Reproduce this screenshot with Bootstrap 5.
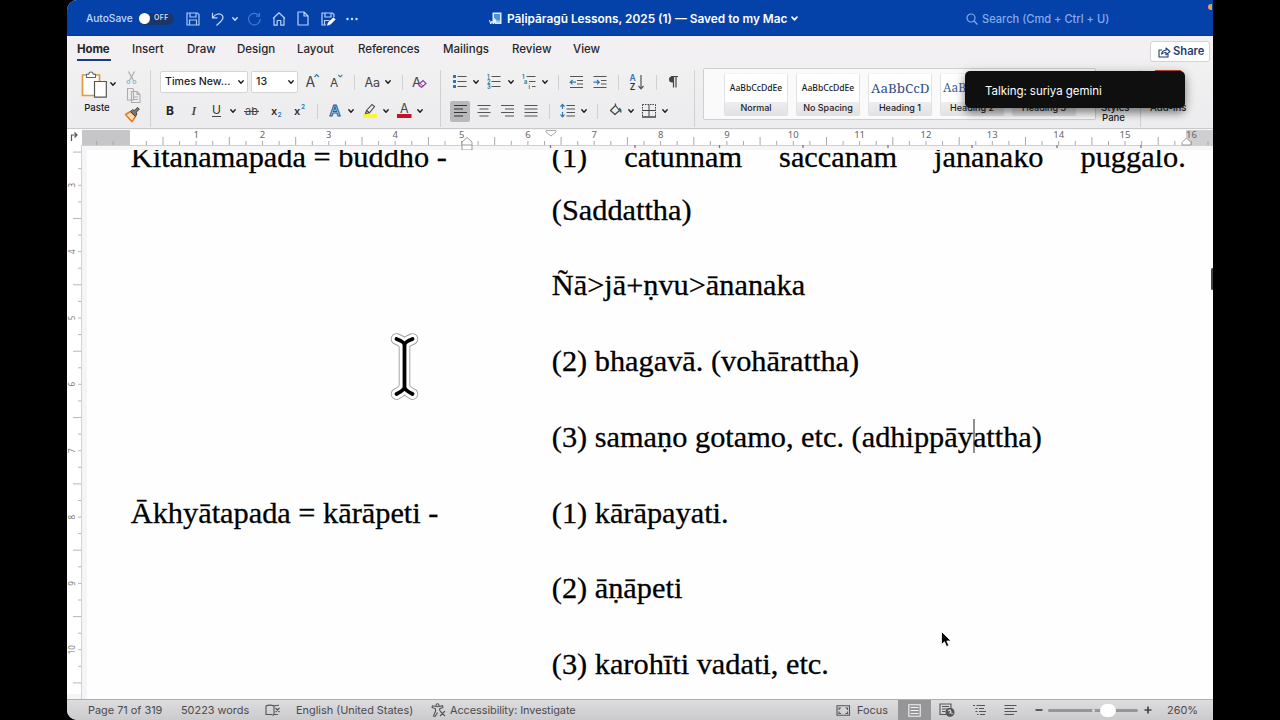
<!DOCTYPE html>
<html lang="en">
<head>
<meta charset="utf-8">
<title>Pāḷipāragū Lessons, 2025 (1)</title>
<link href="https://cdn.jsdelivr.net/npm/bootstrap@5.3.0/dist/css/bootstrap.min.css" rel="stylesheet">
<style>
body{background:#000;font-family:Inter,"Liberation Sans",sans-serif;height:720px;overflow:hidden;color:#1d1d1f}
svg{display:block;flex:none;overflow:visible}
svg text{font-family:Inter,sans-serif}
.win{width:1146px;height:720px;margin-left:67px;background:#f2f0f2;border-radius:10px 0 0 10px;overflow:hidden}
.titlebar{height:36px;padding-top:2px;background:#0442a9;color:#fff;border-bottom:1px solid #023a98}
.titlebar>*,.status>*,.tabs>*{flex:none;white-space:nowrap}
.autosave{width:45px;margin-left:19px;font-size:10.2px;font-weight:500;color:#c3d7f8}
.toggle{width:35px;height:12px;border-radius:6px;background:#1d3668;font-size:7px;font-weight:600;color:#cfdcf3;letter-spacing:.4px;margin-left:8px}
.knob{width:11px;height:11px;border-radius:50%;background:#fff}
.doctitle{width:283px;margin-left:5px;font-size:11.85px;font-weight:600;line-height:20px;padding-top:1px}
.search{width:127px;margin-left:4px;font-size:11.1px;font-weight:500;color:#86abea;line-height:20px;padding-top:1px}
.orange{width:4px;height:6px;background:#e3a04d;border-radius:3px 0 0 3px;margin-left:99px;margin-top:-24px}
.tabs{height:27px;font-size:11.5px;font-weight:500;color:#262628}
.tabs a{color:inherit;text-decoration:none;line-height:27px;height:26px}
.tabs a.active{font-weight:700;border-bottom:2px solid #1d3c78;height:25px;width:34px;letter-spacing:-.1px}
.t2{width:32px;margin-left:21px}.t3{width:28px;margin-left:23px}.t4{width:39px;margin-left:22px}.t5{width:38px;margin-left:21px}.t6{width:63px;margin-left:23px;letter-spacing:-.08px}.t7{width:47px;margin-left:22px}.t8{width:40px;margin-left:22px}.t9{width:27px;margin-left:21px}
.sharebtn{width:60px;height:21px;background:#fff;border:1px solid #d4d3d7;border-radius:3px;color:#1f3b70;font-size:11.2px;font-weight:600}
.ribbon{height:66px;background:linear-gradient(#f2f1f2,#ecebed);border-bottom:1px solid #c9c8cb}
.grp{border-right:1px solid #d0cfd2;height:57px;margin-top:7px;flex:none}
.tools{height:22px;display:flex;align-items:center;margin-top:1px}
.tools+.tools{margin-top:7px}
.tools>*{flex:none}
.vr1{width:1px;height:15px;background:#cfced2}
.sel{height:22px;background:#fff;border:1px solid #d5d4d8;border-radius:2px;font-size:10.6px;font-weight:500;padding:0 2px 0 4px;white-space:nowrap}
.pressed{background:#b9b8bb;border-radius:2px}
.g1{margin-left:1px}.g2{margin-left:2px}.g3{margin-left:3px}.g4{margin-left:4px}.g5{margin-left:5px}.g6{margin-left:6px}.g7{margin-left:7px}.g8{margin-left:8px}.g9{margin-left:9px}.g10{margin-left:10px}.g11{margin-left:11px}.g12{margin-left:12px}.g21{margin-left:21px}
.cap{font-size:9.6px;font-weight:500;line-height:10px;text-align:center;white-space:nowrap}
.gallery{width:393px;height:52px;margin:5px 0 0 8px;background:#fafafa;border:1px solid #cfced2;border-radius:2px;padding:4px 0 0 20px;flex:none}
.stylecard{width:64px;height:43px;border:1px solid #e2e1e4;border-top-color:#f2f2f2;border-radius:2px;background:linear-gradient(#fff 0 28px,#eeedef 28px,#e2e1e4);overflow:hidden;margin-right:8px;flex:none}
.sample{height:27px;font:500 8.6px/28px "Noto Sans",sans-serif;text-align:center;white-space:nowrap;overflow:hidden}
.sample.head1{font:13.4px/28px "Noto Serif","DejaVu Serif","Liberation Serif",serif;color:#2f4f80;text-align:left;padding-left:2px}
.sample.head2{font:12px/28px "Noto Serif","DejaVu Serif",serif;color:#3f5f90;text-align:left;padding-left:2px}
.stylecard .cap{font-size:9px;line-height:13px}
.toast1{left:965px;top:71px;width:220px;height:37px;background:#0f0f10;border-radius:5px;box-shadow:0 5px 9px rgba(0,0,0,.42),0 1px 14px rgba(0,0,0,.14);color:#fff;font-size:11.5px;line-height:41px;padding-left:20px;white-space:nowrap;letter-spacing:-.05px}
.docwrap{height:570px}
.hr{height:21px}
.vrl{width:20px;height:549px;flex:none}
.page{width:1126px;height:549px;background:#fefefe;overflow:hidden;font-family:"Liberation Serif","Times New Roman",serif;font-size:30.34px;line-height:52.5px;color:#000;padding-left:43.8px;-webkit-text-stroke:.3px #000}
.page .pushup{margin-top:-19px}
.lcol{width:421px;flex:none;white-space:nowrap}
.rcol{width:634px;flex:none}
.para{margin-bottom:23.3px;white-space:nowrap}
.status{height:21px;background:linear-gradient(#dddcdf,#cbcacd);border-top:1px solid #aeadaf;font-size:10.9px;color:#4b4a4d}
.viewon{width:33px;height:20px;background:#969597}
.slider{width:90px;height:3px;border-radius:2px;background:#969598}
</style>
</head>
<body>
<svg width="0" height="0" class="position-absolute">
<defs>
<symbol id="chev" viewBox="0 0 8 8"><path d="M1.8 2.8 4 5.2 6.2 2.8" fill="none" stroke="currentColor" stroke-width="1.4" stroke-linecap="round" stroke-linejoin="round"/></symbol>
</defs>
</svg>
<main class="win">
<header class="titlebar d-flex align-items-center">
  <span class="autosave">AutoSave</span>
  <span class="toggle d-flex align-items-center"><span class="knob me-1"></span>OFF</span>
  <svg class="g12" width="14" height="14" viewBox="0 0 14 14" fill="none" stroke="#a9c8f8" stroke-width="1.2"><path d="M1 1h10.500L13 2.500V13H1zM4 1v4h6V1M3.500 13V8h7v5"/></svg>
  <svg class="g11" width="14" height="14" viewBox="0 0 14 14" fill="none" stroke="#c3dafc" stroke-width="1.2"><path d="M1.500.8v5h5M1.800 5.500C5 1.500 9 1 11 3.200c2 2.300.8 4.200-1 6L5.500 13.500"/></svg>
  <svg class="g6" width="8" height="8" style="color:#d5e4fc"><use href="#chev"/></svg>
  <svg class="g8" width="15" height="14" viewBox="0 0 15 14" fill="none" stroke="#3f79d2" stroke-width="1.200"><path d="M11.500 3A5.800 5.800 0 1 0 13.200 7M12.500.8v3.400H9"/></svg>
  <svg class="g10" width="14" height="14" viewBox="0 0 14 14" fill="none" stroke="#b9d2fa" stroke-width="1.2" stroke-linejoin="round"><path d="M1 6.500 7 .8l6 5.700M2 5.700V13.200h3.200V8.500h3.600v4.700H12V5.700"/></svg>
  <svg class="g11" width="12" height="15" viewBox="0 0 12 15" fill="none" stroke="#b9d2fa" stroke-width="1.2" stroke-linejoin="round"><path d="M1 1h6l4 4v9H1zM7 1v4h4"/></svg>
  <svg class="g12" width="15" height="14" viewBox="0 0 15 14" fill="none" stroke="#b9d2fa" stroke-width="1.200"><path d="M5 13H1V1h10.500L13 2.500V5M4 1v4h6V1M3.500 13V8.500h5"/><path d="m6.500 13.300.8-2.800 5.200-4.800 1.700 1.700-5 5z" fill="#fff" stroke="#fff" stroke-width=".7"/></svg>
  <svg class="g9" width="14" height="4" viewBox="0 0 14 4" fill="#d5e4fc"><circle cx="2.500" cy="2" r="1.200"/><circle cx="7" cy="2" r="1.200"/><circle cx="11.500" cy="2" r="1.200"/></svg>
  <svg width="13" height="13" viewBox="0 0 13 13" style="margin-left:130px"><path d="M3.500.5h9v11.500H6L3.500 9z" fill="#dcebfd"/><path d="M5 2h6v7H8.500L5 6z" fill="#4a93d6"/><path d="M7 8.500h4v2H7z" fill="#9cc9f2"/><path d="m.5 8 1.200 4 1.300-3 1.300 3 1.200-4" fill="none" stroke="#fff" stroke-width="1"/></svg>
  <span class="doctitle">Pāḷipāragū Lessons, 2025 (1) — Saved to my Mac</span>
  <svg width="9" height="9" viewBox="0 0 8 8"><use href="#chev"/></svg>
  <svg width="12" height="12" viewBox="0 0 12 12" fill="none" stroke="#86abea" stroke-width="1.200" style="margin-left:167px"><circle cx="5" cy="5" r="4"/><path d="m8 8 3.500 3.500"/></svg>
  <span class="search">Search (Cmd + Ctrl + U)</span>
  <span class="orange"></span>
</header>
<nav class="tabs d-flex align-items-start position-relative">
  <a class="active g10">Home</a><a class="t2">Insert</a><a class="t3">Draw</a><a class="t4">Design</a><a class="t5">Layout</a><a class="t6">References</a><a class="t7">Mailings</a><a class="t8">Review</a><a class="t9">View</a>
  <span class="sharebtn ms-auto d-flex align-items-center" style="margin-right:3px;margin-top:5px"><svg class="g7" width="13" height="12" viewBox="0 0 13 12" fill="none" stroke="#1f3b70" stroke-width="1.100" stroke-linejoin="round"><path d="M4 4H1v7h9V8M3.500 8C4 5.500 5.500 4.200 8 4.200V2l4 3.500L8 8.800V6.500C6 6.500 4.500 7 3.500 8z"/></svg><span class="g2">Share</span></span>
</nav>
<section class="ribbon d-flex">
  <div class="grp d-flex" style="width:84px">
    <div style="width:46px;margin-left:14px">
      <div class="d-flex align-items-center" style="margin-top:1px">
        <svg width="27" height="28" viewBox="0 0 27 28" fill="none"><path d="M1.500 4h17v20.500h-17z" fill="#fff" stroke="#e59a3c" stroke-width="1.700"/><path d="M5.500 6.500V3.200h2.300C8 .2 12 .2 12.200 3.200h2.300v3.300z" fill="#fff" stroke="#666" stroke-width="1.100"/><path d="M13.500 10.500h11.800v15.700H13.500z" fill="#fff" stroke="#555" stroke-width="1.200"/></svg>
        <svg class="g1" width="8" height="8" style="margin-bottom:3px"><use href="#chev"/></svg>
      </div>
      <div class="cap" style="width:32px;margin-top:4px">Paste</div>
    </div>
    <div>
      <svg width="18" height="16" viewBox="0 0 18 16" fill="none" stroke="#a8a7aa" stroke-width="1.100"><path d="M1.500 1.500 6.800 11M7.500 1.500 2.200 11"/><circle cx="1.500" cy="12" r="1.500" stroke="#8cc0cc"/><circle cx="7.500" cy="12" r="1.500" stroke="#8cc0cc"/></svg>
      <svg width="18" height="19" viewBox="4 0 18 19" fill="#eeedef" stroke="#adacaf" stroke-width="1.100"><path d="M4.500 2.500h5l1 1V14h-6zM8.500 5.500H14l3 3v8H8.500zM14 5.500v3h3M10.500 11h4.500M10.500 13.500h4.500"/></svg>
      <svg width="18" height="18" viewBox="3.500 0 18 18" fill="none" stroke-linejoin="round"><path d="m2 9.500 5-3 5 5-3.500 5.200z" fill="#f7dcc0" stroke="#e07d28" stroke-width="1.500"/><path d="m4 12.500 3.500 3.300" stroke="#e07d28"/><path d="m7 6.500 2-1.700 2 .6 3-3 1.800 1.800-3 3 .5 2L12 11.500z" fill="#777" stroke="#444"/></svg>
    </div>
  </div>
  <div class="grp" style="width:290px">
    <div class="tools">
      <span class="sel g9 d-flex align-items-center justify-content-between" style="width:88px">Times New...<svg width="8" height="8"><use href="#chev"/></svg></span>
      <span class="sel g3 d-flex align-items-center justify-content-between" style="width:47px">13<svg width="8" height="8"><use href="#chev"/></svg></span>
      <svg class="g4" width="20" height="20"><text x="3.500" y="15" font-size="14" fill="#444">A</text><path d="m12.500 5 2.200-2.300L16.900 5" fill="none" stroke="#2b77b8" stroke-width="1.200"/></svg>
      <svg class="g4" width="20" height="20"><text x="4" y="15" font-size="12" fill="#444">A</text><path d="m12.300 3 2 2 2-2" fill="none" stroke="#27929b" stroke-width="1.200"/></svg>
      <span class="vr1 g8"></span>
      <svg class="g7" width="20" height="20"><text x="2.500" y="15" font-size="12.500" fill="#444">Aa</text></svg>
      <svg class="g2" width="8" height="8"><use href="#chev"/></svg>
      <span class="vr1 g10"></span>
      <svg class="g6" width="20" height="20"><text x="3" y="14.500" font-size="13.500" fill="#444">A</text><path d="m9.500 12.500 4.500-4 3 3-4.500 4z" fill="#f1edf4" stroke="#8d3f9b" stroke-width="1.200"/><path d="m11 11.200 3 3" stroke="#8d3f9b"/></svg>
    </div>
    <div class="tools">
      <svg class="g9" width="20" height="20"><text x="6" y="14" font-size="12" font-weight="700" fill="#222">B</text></svg>
      <svg class="g4" width="20" height="20"><text x="7.500" y="14" font-size="13.500" style="font-family:'Liberation Serif',serif" font-style="italic" fill="#333" stroke="#333" stroke-width=".2">I</text></svg>
      <svg class="g3" width="20" height="20"><text x="5" y="13" font-size="12" fill="#333">U</text><path d="M5 15.500h9" stroke="#444"/></svg>
      <svg class="g2" width="8" height="8"><use href="#chev"/></svg>
      <svg class="g4" width="20" height="20"><text x="4" y="14" font-size="11" fill="#444">ab</text><path d="M3 10.500h15" stroke="#444"/></svg>
      <svg class="g6" width="20" height="20"><text x="4" y="13.500" font-size="11" font-weight="600" fill="#333">x</text><text x="10.500" y="16" font-size="6.500" font-weight="600" fill="#2b77b8">2</text></svg>
      <svg class="g2" width="20" height="20"><text x="5" y="13.500" font-size="11" font-weight="600" fill="#333">x</text><text x="12" y="8" font-size="6.500" font-weight="600" fill="#2b77b8">2</text></svg>
      <span class="vr1 g8"></span>
      <svg class="g7" width="20" height="20"><text x="4.500" y="15" font-size="15" font-weight="600" fill="#d5e8f8" stroke="#245f9f" stroke-width="1.100">A</text></svg>
      <svg class="g2" width="8" height="8"><use href="#chev"/></svg>
      <svg class="g5" width="20" height="20" viewBox="0 0 20 20"><path d="M3 13h14v4H3z" fill="#faf43a"/><path d="m5.500 12.500 1-3 5.500-6 2.500 2-5 6.300zM6.500 9.500l3 2.300" fill="#eee" stroke="#4a4a4a" stroke-width="1.100"/></svg>
      <svg class="g2" width="8" height="8"><use href="#chev"/></svg>
      <svg class="g4" width="20" height="20"><path d="M3 13h14.500v4H3z" fill="#c8102e"/><text x="6" y="12" font-size="12.500" fill="#444">A</text></svg>
      <svg class="g2" width="8" height="8"><use href="#chev"/></svg>
    </div>
  </div>
  <div class="grp" style="width:254px">
    <div class="tools">
      <svg class="g9" width="20" height="20" viewBox="0 0 20 20" stroke="#555" stroke-width="1.100"><path d="M7.500 4.500h9M7.500 9.500h9M7.500 14.500h9"/><path d="M3 4.500h3M3 9.500h3M3 14.500h3" stroke="#2b77b8" stroke-width="3"/></svg>
      <svg class="g2" width="8" height="8"><use href="#chev"/></svg>
      <svg class="g4" width="20" height="20" viewBox="0 0 20 20"><path d="M7.500 4.500h9M7.500 9.500h9M7.500 14.500h9" stroke="#555" stroke-width="1.100"/><g font-size="5.500" font-weight="700" fill="#2a8292"><text x="3" y="6.500">1</text><text x="3" y="11.500">2</text><text x="3" y="17">3</text></g></svg>
      <svg class="g3" width="8" height="8"><use href="#chev"/></svg>
      <svg class="g4" width="20" height="20" viewBox="0 0 20 20"><path d="M7.500 4.500h9M10 9.500h6.500M13 14.500h3.500" stroke="#555" stroke-width="1.100"/><g font-size="5.500" font-weight="700" fill="#2a8292"><text x="3" y="6.500">1</text><text x="5" y="11.500">a</text><text x="9.500" y="17">i</text></g></svg>
      <svg class="g2" width="8" height="8"><use href="#chev"/></svg>
      <span class="vr1 g9"></span>
      <svg class="g7" width="20" height="20" viewBox="0 0 20 20" fill="none" stroke="#555" stroke-width="1.100"><path d="M4 4.500h13M11 8.500h6M11 12h6M4 15.500h13"/><path d="M10 10.200H4.500M6.500 8l-2.300 2.200 2.300 2.200" stroke="#2b77b8" stroke-width="1.200"/></svg>
      <svg class="g4" width="20" height="20" viewBox="0 0 20 20" fill="none" stroke="#555" stroke-width="1.100"><path d="M3.500 4.500h13M11 8.500h5.500M11 12h5.500M3.500 15.500h13"/><path d="M3.500 10.200H9M7 8l2.300 2.200L7 12.400" stroke="#2b77b8" stroke-width="1.200"/></svg>
      <span class="vr1 g8"></span>
      <svg class="g8" width="20" height="20" viewBox="0 0 20 20"><text x="2.500" y="9" font-size="8.500" font-weight="600" fill="#2b77b8">A</text><text x="2.800" y="17.500" font-size="8.500" font-weight="600" fill="#333">Z</text><path d="M14 3v13.500M11.500 14l2.500 2.800 2.500-2.800" fill="none" stroke="#555" stroke-width="1.200"/></svg>
      <span class="vr1 g9"></span>
      <svg class="g6" width="20" height="20" viewBox="0 0 20 20"><path d="M10 4.500h-1a3 3 0 0 0 0 6h1z" fill="#444"/><path d="M10.500 15.500v-11M13 15.500v-11M8 4.500h7" stroke="#444" stroke-width="1.200"/></svg>
    </div>
    <div class="tools">
      <svg class="g9 pressed" width="20" height="21" viewBox="0 0 20 21" stroke="#333" stroke-width="1.100"><path d="M4 4.500h13M4 8h9M4 11.500h13M4 15h9"/></svg>
      <svg class="g4" width="20" height="21" viewBox="0 0 20 21" stroke="#555" stroke-width="1.100"><path d="M3.500 4.500h13M5.500 8h9M3.500 11.500h13M5.500 15h9"/></svg>
      <svg class="g3" width="20" height="21" viewBox="0 0 20 21" stroke="#555" stroke-width="1.100"><path d="M4 4.500h13M8 8h9M4 11.500h13M8 15h9"/></svg>
      <svg class="g4" width="20" height="21" viewBox="0 0 20 21" stroke="#555" stroke-width="1.100"><path d="M3.500 4.500h13M3.500 8h13M3.500 11.500h13M3.500 15h13"/></svg>
      <span class="vr1 g8"></span>
      <svg class="g8" width="20" height="20" viewBox="0 0 20 20" fill="none" stroke="#555" stroke-width="1.100"><path d="M8.500 4.500h8.500M8.500 8h8.500M8.500 11.500h8.500M8.500 15h8.500"/><path d="M4.500 4v4M2.500 5.700l2-2.200 2 2.200M4.500 11v4.500M2.500 13.700l2 2.200 2-2.200" stroke="#2b77b8" stroke-width="1.200"/></svg>
      <svg class="g2" width="8" height="8"><use href="#chev"/></svg>
      <span class="vr1 g9"></span>
      <svg class="g8" width="20" height="20" viewBox="0 0 20 20" fill="none" stroke="#444" stroke-width="1.200" stroke-linejoin="round"><path d="m4.500 9.500 5-5 4 5-4.500 4zM9.500 4.500V2.500"/><path d="M13 7.500c1.500.5 2 2 1.500 4" stroke="#27667a" stroke-width="1.600"/></svg>
      <svg class="g1" width="8" height="8"><use href="#chev"/></svg>
      <svg class="g4" width="20" height="20" viewBox="0 0 20 20" fill="none" stroke="#444"><path d="M3.500 3.500v12M16.500 3.500v12M3.500 3.500h13" stroke-dasharray="1.500 1"/><path d="M10 3.500v12M3.500 9.500h13" /><path d="M3 16h14" stroke-width="1.500"/></svg>
      <svg class="g2" width="8" height="8"><use href="#chev"/></svg>
    </div>
  </div>
  <div class="gallery d-flex">
    <div class="stylecard"><div class="sample">AaBbCcDdEe</div><div class="cap">Normal</div></div>
    <div class="stylecard"><div class="sample">AaBbCcDdEe</div><div class="cap">No Spacing</div></div>
    <div class="stylecard"><div class="sample head1">AaBbCcD</div><div class="cap">Heading 1</div></div>
    <div class="stylecard"><div class="sample head2">AaBbCcD</div><div class="cap">Heading 2</div></div>
    <div class="stylecard me-0"><div class="sample head2">AaBbCcD</div><div class="cap">Heading 3</div></div>
  </div>
  <div class="grp" style="width:45px;padding-left:5px">
    <svg width="25" height="31" viewBox="0 0 25 31"><path d="M0 2h25v24H0z" fill="#fff" stroke="#222" stroke-width="1"/></svg>
    <div class="cap" style="width:25px;margin-top:2px">Styles<br>Pane</div>
  </div>
  <div class="flex-grow-1" style="padding:7px 0 0 14px">
    <svg width="26" height="30" viewBox="0 0 26 30"><path d="M0 0h26v25H0z" fill="#c4463a"/></svg>
    <div class="cap" style="width:26px;margin-left:-5px;margin-top:3px">Add-ins</div>
  </div>
</section>
<div class="toast1 position-absolute">Talking: suriya gemini</div>
<section class="docwrap">
  <svg class="hr" id="hruler" width="1146" height="21"></svg>
  <div class="d-flex">
    <svg class="vrl" id="vruler" width="20" height="549"></svg>
    <article class="page">
      <div class="pushup">
        <div class="d-flex">
          <div class="lcol">Kitanamapada = buddho -</div>
          <div class="rcol">
            <div class="d-flex justify-content-between"><span>(1)</span><span>catunnam</span><span>saccanam</span><span>jananako</span><span>puggalo.</span></div>
            <div class="para">(Saddattha)</div>
            <div class="para">Ñā&gt;jā+ṇvu&gt;ānanaka</div>
            <div class="para">(2) bhagavā. (vohārattha)</div>
            <div class="para">(3) samaṇo gotamo, etc. (adhippāyattha)</div>
          </div>
        </div>
        <div class="d-flex">
          <div class="lcol">Ākhyātapada = kārāpeti -</div>
          <div class="rcol">
            <div class="para">(1) kārāpayati.</div>
            <div class="para">(2) āṇāpeti</div>
            <div class="para">(3) karohīti vadati, etc.</div>
          </div>
        </div>
      </div>
    </article>
  </div>
</section>
<footer class="status d-flex align-items-center position-absolute" style="top:699px;width:1146px;border-radius:0 0 0 10px">
  <span class="g21" style="width:93px">Page 71 of 319</span>
  <span style="width:84px">50223 words</span>
  <svg width="16" height="13" viewBox="0 0 16 13" fill="none" stroke="#555" stroke-width="1.100"><path d="M9 2v8.500M9 2C7 .8 3 .8 1 2v8.500h5.500c1 0 1.500 1.500 2.500 0h4M9 2c1-.8 3-.8 5-.8M10.500 4l4 4M14.500 4l-4 4"/></svg>
  <span style="width:134px;margin-left:15px">English (United States)</span>
  <svg class="g1" width="16" height="14" viewBox="0 0 16 14" fill="none" stroke="#555" stroke-width="1.100"><circle cx="6.500" cy="2.200" r="1.500"/><path d="M5 3.500 1.500 2.800 1 4.500l3.500 1.300v2.500L2.500 13l1.700.4 2.300-4M8 3.500l3.500-.8.5 1.700-3.300 1.300v2M9 8l5 5M14 8l-5 5"/></svg>
  <span class="g3" style="width:386px;letter-spacing:-.06px">Accessibility: Investigate</span>
  <svg width="15" height="11" viewBox="0 0 15 11" fill="none" stroke="#555" stroke-width="1.100"><path d="M1 .8h12.500v9.500H1z"/><path d="M3 5V3h2M9.500 3h2v2M11.500 6.500v2h-2M5 8.500H3v-2"/></svg>
  <span style="margin-left:6px;width:41px">Focus</span>
  <span class="viewon d-flex align-items-center justify-content-center"><svg width="13" height="13" viewBox="0 0 13 13" fill="none" stroke="#f2f2f2" stroke-width="1.100"><path d="M.8.8h11.400v11.400H.8zM2.500 3.500h8M2.500 6.500h8M2.500 9.500h8"/></svg></span>
  <svg class="g8" width="16" height="14" viewBox="0 0 16 14" fill="none" stroke="#555" stroke-width="1.100"><path d="M7 11.500H1V1h11v4M3 3.500h7M3 6h5M3 8.500h3.500"/><circle cx="11" cy="9.300" r="4" fill="#555"/><path d="m9 8 2-1 1 2-1.500 1.500M12.500 10l1 1" stroke="#ddd"/></svg>
  <svg width="15" height="12" viewBox="0 0 15 12" stroke="#555" stroke-width="1.200" style="margin-left:17px"><path d="M1 1.500h2M4.500 1.500H13M3.500 4.500h2M7 4.500h5M3.500 7.500h2M7 7.500h7M5 10.500h1.500M8 10.500h5"/></svg>
  <svg width="14" height="12" viewBox="0 0 14 12" stroke="#555" stroke-width="1.200" style="margin-left:17px"><path d="M.5 1.500h12M.5 4.500h9.500M.5 7.500h12.500M.5 10.500h9.500"/></svg>
  <svg width="8" height="8" viewBox="0 0 8 8" stroke="#444" stroke-width="1.700" style="margin-left:17px"><path d="M.5 4h7"/></svg>
  <span class="slider position-relative g5"><svg class="position-absolute" style="left:43px;top:-7px" width="26" height="16" viewBox="0 0 26 16"><circle cx="2.500" cy="8.500" r="1.500" fill="#ddd"/><rect x="9" y="2" width="16" height="13" rx="6.500" fill="#fff"/></svg></span>
  <svg class="g6" width="8" height="8" viewBox="0 0 8 8" stroke="#444" stroke-width="1.700"><path d="M.5 4h7M4 .5v7"/></svg>
  <span style="margin-left:15px">260%</span>
</footer>
</main>
<!-- text caret, pointers and scrollbar thumb lie over the document -->
<svg class="position-absolute" style="left:973px;top:419px" width="2" height="34"><path d="M1 0v34" stroke="#222"/></svg>
<svg class="position-absolute" style="left:388px;top:330px" width="34" height="72" viewBox="0 0 34 72" fill="none" stroke-linecap="round" stroke-linejoin="round">
<path d="M8.500 9Q16.500 12 16.500 17V55Q16.500 60 8.500 64M24.500 9Q16.500 12 16.500 17M16.500 55Q16.500 60 24.500 64" stroke="#999" stroke-width="11.500"/>
<path d="M8.500 9Q16.500 12 16.500 17V55Q16.500 60 8.500 64M24.500 9Q16.500 12 16.500 17M16.500 55Q16.500 60 24.500 64" stroke="#fff" stroke-width="9.800"/>
<path d="M8.500 9Q16.500 12 16.500 15V57Q16.500 60 8.500 64M24.500 9Q16.500 12 16.500 15M16.500 57Q16.500 60 24.500 64" stroke="#000" stroke-width="3.800"/></svg>
<svg class="position-absolute" style="left:940px;top:630px" width="14" height="20" viewBox="0 0 14 20"><path d="M1.500 1.500v13l3-2.700 2 4.700 2.300-1-2-4.500H11z" fill="#000" stroke="#fff" stroke-width=".8"/></svg>
<svg class="position-absolute overflow-hidden" style="left:1211px;top:268px" width="2" height="22"><rect width="4" height="22" rx="1.500" fill="#444"/></svg>
<script src="https://cdn.jsdelivr.net/npm/bootstrap@5.3.0/dist/js/bootstrap.bundle.min.js"></script>
<script>
// Rulers: one unit is 66.35px, with quarter marks and a taller half mark.
const U = 66.35;
let h = '<rect width="1146" height="21" fill="#f6f5f7"/><rect x="14" y="1" width="1132" height="15" fill="#fff"/><rect x="15" y="1" width="48" height="15" fill="#c6c5c8"/><rect x="1119" y="1" width="27" height="15" fill="#cfced1"/><path d="M0 16.500h1146" stroke="#d0cfd2"/><rect width="14" height="16" fill="#fff"/><path d="M4.500 12V6h5M7.500 3.500 10 6 7.500 8.500" fill="none" stroke="#555" stroke-width="1.200"/>';
for (let i = -2; i <= 65; i++) {
  const x = 62.8 + i * U / 4;
  if (i === 0 || x > 1144) continue;
  h += `<path d="M${x.toFixed(1)} ${i % 4 === 2 ? 8 : 12}V16" stroke="#a9a8ab"/>`;
  if (i > 0 && i % 4 === 0) h += `<text x="${x.toFixed(1)}" y="9" font-size="9.5" style="font-family:'Noto Sans'" text-anchor="middle" fill="#666">${i / 4}</text>`;
}
[483.5, 568, 652.5, 736, 821, 905, 990, 1074].forEach(x => h += `<path d="M${x} 16v3" stroke="#777" stroke-width="1.300"/>`);
h += '<path d="M395 16v-3l5-4.500 5 4.500v8h-10zM395 16h10" fill="#fff" stroke="#999"/><path d="M479 1.500h10v1.500l-5 4-5-4z" fill="#fff" stroke="#aaa"/><path d="M1115 16v-2.500l4.500-4.500 4.500 4.500V16z" fill="#fff" stroke="#999"/>';
document.getElementById('hruler').innerHTML = h;
let v = '<rect width="20" height="549" fill="#f5f4f6"/><rect width="14" height="549" y="-5" fill="#fff"/><path d="M14.500-5v555" stroke="#d3d2d5"/>';
for (let i = -2; i <= 31; i++) {
  const y = 35.3 + i * U / 4;
  v += `<path d="M${((i % 4) + 4) % 4 === 2 ? 6 : 11} ${y.toFixed(1)}H14.500" stroke="#b9b8bb"/>`;
  if (i >= 0 && i % 4 === 0) v += `<text transform="translate(7.500 ${y.toFixed(1)}) rotate(-90)" font-size="8" style="font-family:'Noto Sans'" text-anchor="middle" fill="#777">${3 + i / 4}</text>`;
}
document.getElementById('vruler').innerHTML = v;
</script>
</body>
</html>
